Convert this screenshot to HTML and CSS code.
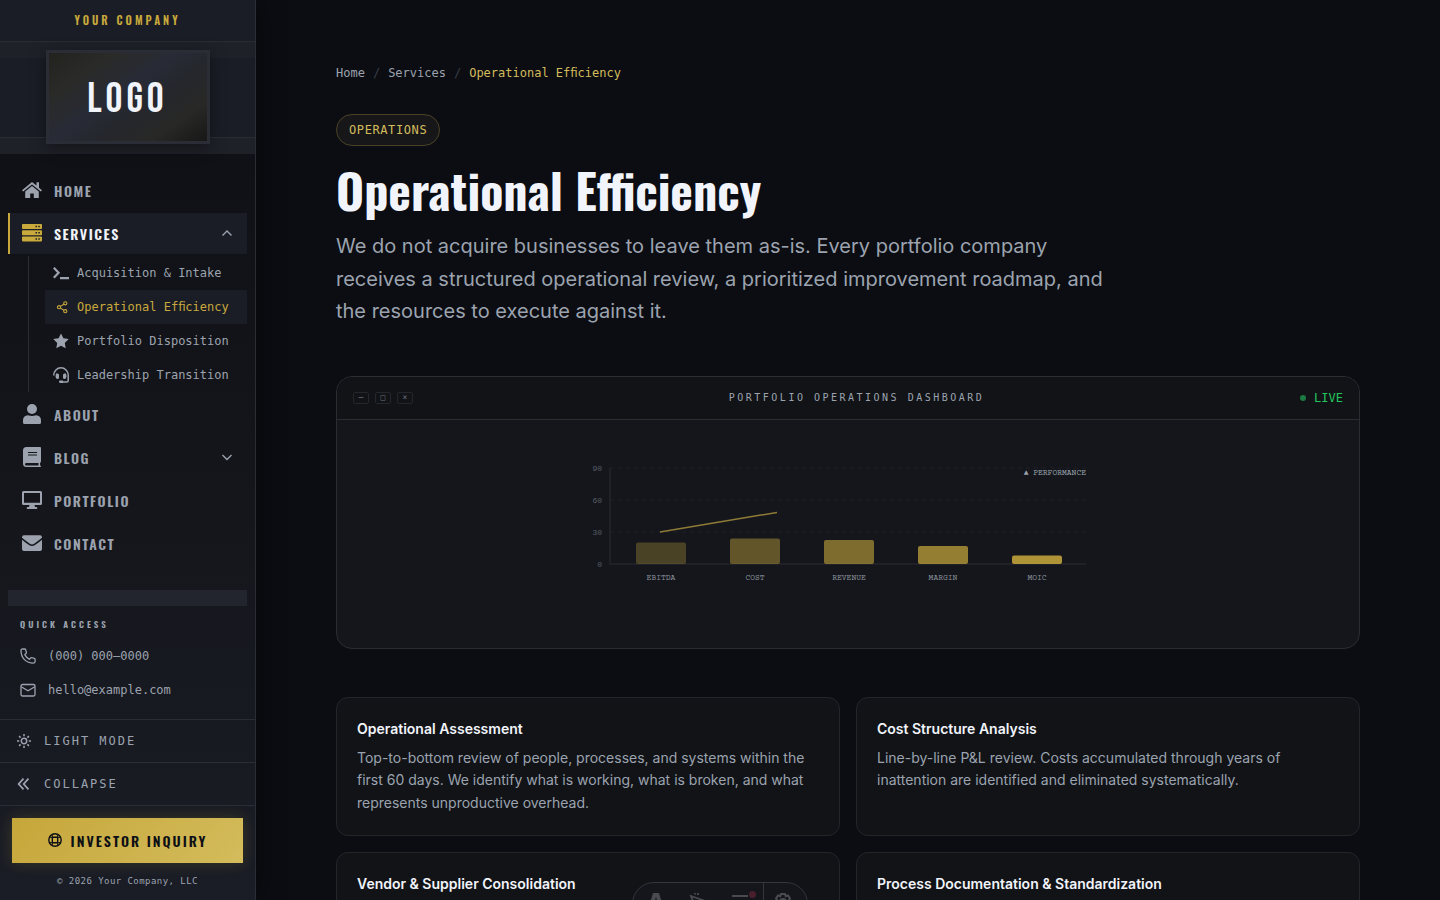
FILE: index.html
```html
<!DOCTYPE html>
<html lang="en">
<head>
  <meta charset="UTF-8">
  <meta name="viewport" content="width=device-width, initial-scale=1.0">
  <title>Operational Efficiency</title>
  <link rel="stylesheet" href="styles.css">
</head>
<body>
  <aside class="sidebar">
    <div class="company">YOUR COMPANY</div>
    <div class="logo-area">
      <div class="logo">LOGO</div>
    </div>
    <div class="band"></div>

    <nav class="menu">
      <a class="menu-item" href="#">
        <svg viewBox="0 0 20 20" fill="currentColor"><path d="M10 2 0 10.200l1.200 1.400L10 4.400l8.800 7.200 1.200-1.400-3-2.500V2.300h-2.500v3.300z"/><path d="M10 6 3.200 11.600V18h5v-4.500h3.600V18h5v-6.400z"/></svg>
        HOME
      </a>
      <a class="menu-item active" href="#">
        <svg viewBox="0 0 20 20" fill="currentColor"><path fill-rule="evenodd" d="M.8 1h18.400q.8 0 .8.8v3.400q0 .8-.8.8H.8Q0 6 0 5.200V1.800Q0 1 .8 1zM13.500 2.700v1.500H15V2.700zm2.800 0v1.500h1.500V2.700zM.8 7.200h18.400q.8 0 .8.8v3.400q0 .8-.8.8H.8q-.8 0-.8-.8V8q0-.8.8-.8zm12.700 1.700v1.500H15V8.900zm2.800 0v1.500h1.500V8.900zM.8 13.400h18.400q.8 0 .8.800v3.400q0 .800-.800.800H.8q-.8 0-.8-.800v-3.400q0-.8.8-.8zm12.700 1.800v1.500H15v-1.500zm2.800 0v1.500h1.500v-1.500z"/></svg>
        SERVICES
        <svg class="chevron" viewBox="0 0 12 12" fill="none" stroke="currentColor" stroke-width="1.400"><path d="M1.500 8.500 6 4l4.500 4.500"/></svg>
      </a>
      <div class="submenu">
        <a class="submenu-item" href="#">
          <svg viewBox="0 0 16 16" fill="none" stroke="currentColor" stroke-width="2.200"><path d="m.8 2.800 4.800 5-4.800 5M7 13.200h9"/></svg>
          Acquisition &amp; Intake
        </a>
        <a class="submenu-item active" href="#">
          <svg viewBox="0 0 16 16" fill="none" stroke="currentColor" stroke-width="1.100"><circle cx="6" cy="8.200" r="1.600"/><circle cx="12.300" cy="4.300" r="1.600"/><circle cx="12.300" cy="12.200" r="1.600"/><path d="m7.400 7.400 3.500-2.200M7.400 9.100l3.500 2.200"/></svg>
          Operational Efficiency
        </a>
        <a class="submenu-item" href="#">
          <svg viewBox="0 0 16 16" fill="currentColor"><path d="m8 .5 2.400 4.800 5.300.8-3.900 3.800.9 5.400L8 12.800l-4.700 2.500.9-5.400L.3 6.100l5.300-.8z"/></svg>
          Portfolio Disposition
        </a>
        <a class="submenu-item" href="#">
          <svg viewBox="0 0 16 16" fill="none" stroke="currentColor" stroke-width="1.500"><path d="M.8 8.500V8a7.200 7.200 0 0 1 14.400 0v5.500q0 1.500-1.500 1.500H10"/><path fill="currentColor" stroke="none" d="M3 6.500h1.500q1.500 0 1.500 1.500v2.500Q6 12 4.500 12 3 12 2.500 9.500zM13 6.500h-1.500Q10 6.500 10 8v2.500q0 1.500 1.500 1.500 1.500 0 2-2.500zM7 13.500h3v2.500H7.500q-1.500 0-1.500-1.200t1-1.300z"/></svg>
          Leadership Transition
        </a>
      </div>
      <a class="menu-item" href="#">
        <svg viewBox="0 0 20 20" fill="currentColor"><circle cx="10" cy="5" r="5"/><path d="M1 16.500Q1 11.500 6 11.200q4 1.600 8 0 5 .3 5 5.300V18.500q0 1.500-1.500 1.500h-15Q1 20 1 18.500z"/></svg>
        ABOUT
      </a>
      <a class="menu-item" href="#">
        <svg viewBox="0 0 20 20" fill="currentColor"><path fill-rule="evenodd" d="M4.500 0H18q1 0 1 1v13.500q0 .8-.8 1-.4 1.500 0 3 .8.300.8.800 0 .7-.7.700H4.500Q1 20 1 16.500v-13Q1 0 4.500 0zM6 5v1h9V5zm0 2.500v1h9v-1zM4.500 16Q3 16 3 17.300t1.500 1.200H16.500V16z"/></svg>
        BLOG
        <svg class="chevron" viewBox="0 0 12 12" fill="none" stroke="currentColor" stroke-width="1.400"><path d="M1.500 4 6 8.500 10.500 4"/></svg>
      </a>
      <a class="menu-item" href="#">
        <svg viewBox="0 0 20 20" fill="currentColor"><path fill-rule="evenodd" d="M1.500 1h17Q20 1 20 2.500v11q0 1.500-1.500 1.500h-6l.5 2h1.500q.8 0 .8 1t-.8 1h-9q-.8 0-.8-1t.8-1H7l.5-2h-6Q0 15 0 13.500v-11Q0 1 1.500 1zM2 3v9.700h16V3z"/></svg>
        PORTFOLIO
      </a>
      <a class="menu-item" href="#">
        <svg viewBox="0 0 20 20" fill="currentColor"><path d="M2 2.300h16q2 0 2 2v.5q-3 2.600-7.500 5.600-1.500 1-2.500 1t-2.500-1Q3 7.400 0 4.800v-.5q0-2 2-2zM0 6.800q3 2.600 6.600 5 2 1.300 3.400 1.300t3.400-1.300Q17 9.400 20 6.800V16q0 2-2 2H2q-2 0-2-2z"/></svg>
        CONTACT
      </a>
    </nav>

    <div class="quick">
      <div class="quick-band"></div>
      <div class="quick-title">QUICK ACCESS</div>
      <a class="quick-link" href="#">
        <svg viewBox="0 0 16 16" fill="none" stroke="currentColor" stroke-width="1.300"><path d="M2.500 1h2.200q.8 0 1 .8l.7 2.700q.1.600-.4 1L4.800 6.600q1.600 3.200 4.700 4.700l1.100-1.300q.4-.5 1-.3l2.700.7q.8.200.8 1v2.200q0 1.500-1.500 1.500Q8 15.100 4.400 11.600 1 8.200 1 2.500 1 1 2.500 1z"/></svg>
        (000) 000–0000
      </a>
      <a class="quick-link" href="#">
        <svg viewBox="0 0 16 16" fill="none" stroke="currentColor" stroke-width="1.300"><rect x="1" y="2.500" width="14" height="11.500" rx="1.500"/><path d="M1.200 4.700 8 8.800l6.800-4.100"/></svg>
        hello@example.com
      </a>
    </div>

    <button class="tool-btn" type="button">
      <svg viewBox="0 0 16 16" fill="none" stroke="currentColor" stroke-width="1.500"><circle cx="8" cy="8" r="2.700"/><path d="M8 1v2.200M8 12.800V15M1 8h2.200M12.800 8H15M3.100 3.100l1.500 1.500M11.400 11.400l1.500 1.500M3.100 12.900l1.500-1.500M11.400 4.600l1.500-1.500"/></svg>
      LIGHT MODE
    </button>
    <button class="tool-btn" type="button">
      <svg viewBox="0 0 16 16" fill="none" stroke="currentColor" stroke-width="1.800"><path d="M7.500 2.700 2.700 8l4.800 5.300M12.500 2.700 7.700 8l4.800 5.300"/></svg>
      COLLAPSE
    </button>
    <div class="sidebar-foot">
      <button class="inquiry" type="button">
        <svg viewBox="0 0 14 14" fill="none" stroke="currentColor" stroke-width="1.400"><circle cx="7" cy="7" r="6.200"/><rect x="4.300" y="4.300" width="5.400" height="5.400" rx="1"/><path d="M4.300 1.500v3M9.700 1.500v3M4.300 9.700v3M9.700 9.700v3M1.500 4.300h3M1.500 9.700h3M9.700 4.300h3M9.700 9.700h3" stroke-width="1"/></svg>
        INVESTOR INQUIRY
      </button>
      <div class="copyright">© 2026 Your Company, LLC</div>
    </div>
  </aside>

  <main class="content">
    <nav class="breadcrumb">
      <a href="#">Home</a><span>/</span><a href="#">Services</a><span>/</span><b>Operational Efficiency</b>
    </nav>
    <div class="badge">OPERATIONS</div>
    <h1>Operational Efficiency</h1>
    <p class="lead">We do not acquire businesses to leave them as-is. Every portfolio company receives a structured operational review, a prioritized improvement roadmap, and the resources to execute against it.</p>

    <section class="dashboard">
      <div class="dash-head">
        <div class="win-btns"><span>─</span><span>□</span><span>×</span></div>
        <div class="dash-title">PORTFOLIO OPERATIONS DASHBOARD</div>
        <div class="live">LIVE</div>
      </div>
      <div class="dash-body">
        <svg class="chart" viewBox="0 0 520 180">
          <g class="grid">
            <path d="M22 28h476M22 60h476M22 92h476"/>
          </g>
          <path class="axis" d="M22 28v96h476"/>
          <g class="y-label">
            <text x="14" y="31">90</text>
            <text x="14" y="63">60</text>
            <text x="14" y="95">30</text>
            <text x="14" y="127">0</text>
          </g>
          <g class="bars">
            <rect x="48" y="102.500" width="50" height="21.500" rx="2" opacity=".3"/>
            <rect x="142" y="98.500" width="50" height="25.500" rx="2" opacity=".43"/>
            <rect x="236" y="100" width="50" height="24" rx="2" opacity=".59"/>
            <rect x="330" y="106" width="50" height="18" rx="2" opacity=".71"/>
            <rect x="424" y="115.500" width="50" height="8.500" rx="2" opacity=".86"/>
          </g>
          <path class="trend" d="M72 92 167 76l22-3.500"/>
          <g class="x-label">
            <text x="73" y="140">EBITDA</text>
            <text x="167" y="140">COST</text>
            <text x="261" y="140">REVENUE</text>
            <text x="355" y="140">MARGIN</text>
            <text x="449" y="140">MOIC</text>
          </g>
          <text class="legend" x="498" y="35">▲ PERFORMANCE</text>
        </svg>
      </div>
    </section>

    <section class="cards">
      <article class="card">
        <h2>Operational Assessment</h2>
        <p>Top-to-bottom review of people, processes, and systems within the first 60 days. We identify what is working, what is broken, and what represents unproductive overhead.</p>
      </article>
      <article class="card">
        <h2>Cost Structure Analysis</h2>
        <p>Line-by-line P&amp;L review. Costs accumulated through years of inattention are identified and eliminated systematically.</p>
      </article>
      <article class="card">
        <h2>Vendor &amp; Supplier Consolidation</h2>
      </article>
      <article class="card">
        <h2>Process Documentation &amp; Standardization</h2>
      </article>
    </section>
  </main>

  <div class="dock">
    <button type="button" aria-label="Text size">
      <svg viewBox="0 0 20 20" fill="none" stroke="currentColor" stroke-width="4"><path d="M4 18 8.500 3h3L16 18M6 12h8"/></svg>
    </button>
    <button type="button" aria-label="Effects">
      <svg viewBox="0 0 20 20" fill="none" stroke="currentColor" stroke-width="1.800"><path d="m3 4 14 5-6 2-3 6zM7 2.500V1M10 3V1"/></svg>
    </button>
    <button type="button" aria-label="Menu">
      <svg viewBox="0 0 20 20" fill="none" stroke="currentColor" stroke-width="2"><path d="M2 4h16M2 10h16M2 16h16"/></svg>
      <i class="dot"></i>
    </button>
    <button class="dock-last" type="button" aria-label="Settings">
      <svg viewBox="0 0 20 20" fill="none" stroke="currentColor" stroke-width="2"><path d="M8 2h4l.7 2.300 2.300-.8 2 3-1.500 2v3l1.500 2-2 3-2.300-.8L12 18H8l-.7-2.300-2.300.8-2-3 1.500-2v-3L3 6.500l2-3 2.300.8z"/><circle cx="10" cy="10" r="3"/></svg>
    </button>
  </div>
</body>
</html>
```
FILE: styles.css
```css
* {
  box-sizing: border-box;
}
body {
  margin: 0;
  height: 100vh;
  display: flex;
  overflow: hidden;
  background: #0b0d12;
  color: #9ca3af;
  font-family: Inter, "Liberation Sans", sans-serif;
  text-rendering: optimizeLegibility;
  -webkit-font-smoothing: antialiased;
}
a {
  color: inherit;
  text-decoration: none;
}
button {
  font: inherit;
  color: inherit;
  background: none;
  border: 0;
  cursor: pointer;
}
svg {
  flex-shrink: 0;
}

/* sidebar */
.sidebar {
  position: relative;
  z-index: 1;
  width: 256px;
  height: 100vh;
  flex-shrink: 0;
  display: flex;
  flex-direction: column;
  background: linear-gradient(#0d0f14, #14151a 50%, #1a1d26);
  border-right: 1px solid #2a2d36;
  box-shadow: 4px 0 24px rgba(0, 0, 0, 0.4);
}
.company,
.menu-item,
.quick-title,
.inquiry,
h1 {
  font-family: Oswald, "Liberation Sans Narrow", "DejaVu Sans Condensed", sans-serif;
}
.company {
  height: 42px;
  line-height: 41px;
  text-align: center;
  font-size: 11px;
  font-weight: 600;
  letter-spacing: 3px;
  color: #c9a93c;
  background: #1a1d26;
  border-bottom: 1px solid #2a2d36;
}
.logo-area {
  height: 96px;
  padding-top: 8px;
  display: flex;
  justify-content: center;
  background: linear-gradient(#1e2128 16px, #1a1d26 16px);
  border-bottom: 1px solid #2a2d36;
}
.logo {
  position: relative;
  width: 164px;
  height: 94px;
  line-height: 94px;
  text-align: center;
  font-family: "Bebas Neue", Oswald, "Liberation Sans Narrow", sans-serif;
  font-size: 42px;
  letter-spacing: 4px;
  color: #f1f4fa;
  border: 3px solid #2a2d36;
  background: linear-gradient(145deg, #22221f, #2a2a28 22%, #282b36 45%, #25272d 60%, #282826 80%, #171717);
  box-shadow: 0 4px 16px rgba(0, 0, 0, 0.4);
}
.band {
  height: 16px;
  flex-shrink: 0;
  background: #1e2128;
}
.menu {
  flex: 1;
  padding: 16px 8px 0;
}
.menu-item {
  height: 41px;
  margin-bottom: 2px;
  padding: 0 14px 0 12px;
  display: flex;
  align-items: center;
  gap: 12px;
  font-size: 14px;
  font-weight: 600;
  letter-spacing: 0.11em;
  border-left: 2px solid transparent;
}
.menu-item svg {
  width: 20px;
  height: 20px;
  margin-bottom: 2px;
}
.menu-item .chevron {
  width: 12px;
  height: 12px;
  margin-left: auto;
  color: #9ca3af;
}
.menu-item.active {
  color: #f1f4fa;
  background: #1a1d26;
  border-color: #c9a93c;
}
.menu-item.active svg:first-child {
  color: #c9a93c;
}
.submenu {
  margin: 0 0 2px 20px;
  padding-left: 16px;
  border-left: 1px solid #2a2d36;
}
.submenu-item {
  height: 34px;
  padding-left: 8px;
  display: flex;
  align-items: center;
  gap: 8px;
  font-family: "DejaVu Sans Mono", monospace;
  font-size: 12px;
}
.submenu-item svg {
  width: 16px;
  height: 16px;
}
.submenu-item.active {
  color: #c9a93c;
  background: #1a1d26;
}
.submenu-item,
.breadcrumb {
  font-feature-settings: "liga" 1, "dlig" 1;
}
.quick {
  padding: 0 8px 12px;
}
.quick-band {
  height: 16px;
  background: #22252e;
}
.quick-title {
  padding: 12px 12px 8px;
  line-height: 13px;
  font-size: 9px;
  font-weight: 600;
  letter-spacing: 3px;
}
.quick-link {
  height: 34px;
  padding: 0 12px;
  display: flex;
  align-items: center;
  gap: 12px;
  font-family: "DejaVu Sans Mono", monospace;
  font-size: 12px;
}
.quick-link svg {
  width: 16px;
  height: 16px;
}
.tool-btn {
  height: 43px;
  padding: 0 16px;
  display: flex;
  align-items: center;
  gap: 12px;
  flex-shrink: 0;
  font-family: "DejaVu Sans Mono", monospace;
  font-size: 12px;
  letter-spacing: 2px;
  border-top: 1px solid #2a2d36;
}
.tool-btn svg {
  width: 16px;
  height: 16px;
}
.sidebar-foot {
  padding: 12px 12px 13px;
  border-top: 1px solid #2a2d36;
}
.inquiry {
  width: 100%;
  height: 45px;
  display: flex;
  align-items: center;
  justify-content: center;
  gap: 9px;
  font-size: 14px;
  font-weight: 600;
  letter-spacing: 2px;
  color: #0d0f14;
  background: linear-gradient(135deg, #c5a63a, #d4bc5c);
  box-shadow: 0 0 16px rgba(201, 169, 60, 0.2);
}
.inquiry svg {
  width: 14px;
  height: 14px;
  margin-bottom: 2px;
}
.copyright {
  margin-top: 12px;
  line-height: 12px;
  text-align: center;
  font-family: "DejaVu Sans Mono", monospace;
  font-size: 9px;
  letter-spacing: 0.05em;
}

/* content */
.content {
  flex: 1;
  min-width: 0;
  padding: 64px 80px;
  overflow-y: auto;
  scrollbar-width: none;
}
.breadcrumb {
  display: flex;
  gap: 8px;
  margin-bottom: 32px;
  line-height: 18px;
  font-family: "DejaVu Sans Mono", monospace;
  font-size: 12px;
}
.breadcrumb span {
  color: #3a3d46;
}
.breadcrumb b {
  font-weight: 400;
  color: #d4bc5c;
}
.badge {
  width: fit-content;
  padding: 0 12px;
  line-height: 30px;
  font-family: "DejaVu Sans Mono", monospace;
  font-size: 12px;
  letter-spacing: 0.05em;
  color: #d4bc5c;
  background: #17171a;
  border: 1px solid #4b4225;
  border-radius: 16px;
}
h1 {
  margin: 16px 0 12px;
  line-height: 56px;
  font-size: 48px;
  font-weight: 700;
  color: #f1f4fa;
}
.lead {
  max-width: 768px;
  margin: 0 0 48px;
  line-height: 1.625;
  font-size: 20px;
}
.dashboard {
  margin-bottom: 48px;
  background: #14161b;
  border: 1px solid #2a2d32;
  border-radius: 16px;
  overflow: hidden;
}
.dash-head {
  height: 43px;
  padding: 0 16px;
  display: flex;
  align-items: center;
  justify-content: space-between;
  background: #111317;
  border-bottom: 1px solid #2a2d32;
  font-family: "DejaVu Sans Mono", monospace;
}
.win-btns {
  display: flex;
  gap: 6px;
}
.win-btns span {
  width: 16px;
  height: 12px;
  line-height: 9px;
  text-align: center;
  font-size: 8px;
  color: #6b7280;
  border: 1px solid #24262b;
  border-radius: 2px;
}
.dash-title {
  font-size: 10px;
  letter-spacing: 0.25em;
}
.live {
  display: flex;
  align-items: center;
  gap: 8px;
  font-size: 12px;
  color: #22c55e;
}
.live::before {
  content: "";
  width: 6px;
  height: 6px;
  border-radius: 50%;
  background: #1b7a41;
}
.dash-body {
  height: 228px;
  padding-top: 20px;
  display: flex;
  justify-content: center;
}
.chart {
  width: 520px;
  height: 180px;
  font-family: "Courier Prime", "IBM Plex Mono", Courier, "Liberation Mono", monospace;
}
.grid {
  fill: none;
  stroke: #1f2127;
  stroke-dasharray: 4 4;
}
.axis {
  fill: none;
  stroke: #24262c;
  stroke-width: 1.5;
}
.y-label {
  font-family: "Liberation Mono", monospace;
  font-size: 8px;
  text-anchor: end;
  fill: #565b64;
}
.x-label {
  font-size: 8px;
  text-anchor: middle;
  fill: #8b919c;
}
.bars {
  fill: #c9a93c;
}
.trend {
  fill: none;
  stroke: #8f7b37;
  stroke-width: 1.5;
}
.legend {
  font-size: 8px;
  text-anchor: end;
  fill: #9ca3af;
}
.cards {
  display: grid;
  grid-template-columns: 1fr 1fr;
  gap: 16px;
}
.card {
  min-height: 139px;
  padding: 20px;
  background: #111317;
  border: 1px solid #22252a;
  border-radius: 12px;
}
.card h2 {
  margin: 0 0 8px;
  line-height: 21px;
  font-size: 14px;
  font-weight: 600;
  color: #f1f4fa;
}
.card p {
  margin: 0;
  line-height: 1.625;
  font-size: 14px;
}

/* floating toolbar */
.dock {
  position: fixed;
  left: 50%;
  bottom: -26px;
  transform: translateX(-50%);
  display: flex;
  height: 44px;
  padding: 0 4px;
  border: 1px solid #34363b;
  border-radius: 22px;
  background: #15161b;
  color: #4a4b50;
}
.dock button {
  position: relative;
  width: 42px;
  padding: 9px 13px 9px 9px;
}
.dock svg {
  width: 20px;
  height: 20px;
}
.dock .dock-last {
  width: 40px;
  border-left: 1px solid #34363b;
}
.dot {
  position: absolute;
  top: 8px;
  right: 7px;
  width: 7px;
  height: 7px;
  border-radius: 50%;
  background: #4a1f2d;
}
```
